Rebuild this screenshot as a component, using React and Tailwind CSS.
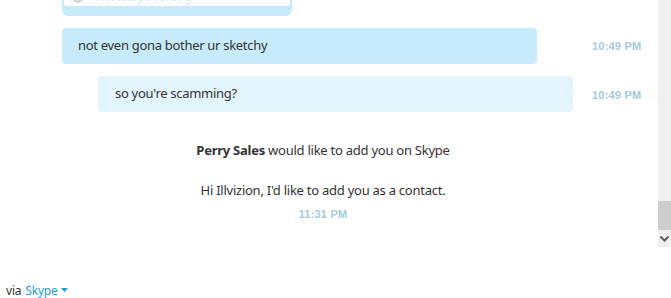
import React from "react";

export default function App() {
  const font = { fontFamily: '"Segoe UI", "Noto Sans", "Open Sans", sans-serif' };
  const ts = { fontFamily: '"Liberation Sans", Arial, sans-serif' };
  return (
    <div className="w-[671px] h-[298px] bg-white relative overflow-hidden text-[#333]" style={font}>
      <div className="flex h-[247px]">
        <div className="flex-1 flex flex-col">
          {/* partial top bubble */}
          <div className="ml-[62px] w-[230px] h-[16px] bg-[#c7ebfb] rounded-b-[6px] relative overflow-hidden">
            <div className="absolute left-[2px] right-[2px] top-0 h-[6px] bg-[#fbfdfe] rounded-b-[3px] overflow-hidden">
              <div className="absolute left-[8px] top-[-10px] w-[12px] h-[13px] rounded-full bg-[#dadada]"></div>
              <div className="absolute left-[30px] top-[-12px] text-[14px] text-[#e6eaec] leading-[16px]">www.sythe.org</div>
            </div>
          </div>
          {/* row 1 */}
          <div className="flex items-center mt-[12px] h-[36px]">
            <div className="ml-[62px] w-[475px] h-[36px] bg-[#c7ebfb] rounded-[4px] flex items-center pl-[16px] text-[13px] tracking-[-0.3px]">
              not even gona bother ur sketchy
            </div>
            <div className="ml-[55px] text-[11px] font-bold text-[#a6c9dd] tracking-[0.2px]" style={ts}>10:49 PM</div>
          </div>
          {/* row 2 */}
          <div className="flex items-center mt-[12px] h-[36px]">
            <div className="ml-[98px] w-[475px] h-[36px] bg-[#e3f4fc] rounded-[4px] flex items-center pl-[17px] text-[13px] tracking-[-0.3px] relative">
              so you're scamming?
              <svg className="absolute right-[-5px] top-[12px]" width="6" height="12" viewBox="0 0 6 12">
                <path d="M0 0 C0 3 1 4.5 3 5.5 L5 6 L3 6.5 C1 7.5 0 9 0 12 Z" fill="#e3f4fc" />
              </svg>
            </div>
            <div className="ml-[19px] mt-[2px] text-[11px] font-bold text-[#a6c9dd] tracking-[0.2px]" style={ts}>10:49 PM</div>
          </div>
          {/* contact request */}
          <div className="mt-[28px] flex flex-col items-center w-[646px]">
            <div className="text-[13px] tracking-[-0.25px] leading-[20px]"><span className="font-bold">Perry Sales</span> would like to add you on Skype</div>
            <div className="mt-[20px] text-[13px] tracking-[-0.25px] leading-[20px]">Hi Illvizion, I'd like to add you as a contact.</div>
            <div className="mt-[7px] text-[11px] font-bold text-[#a6c9dd] leading-[14px] tracking-[0.2px]" style={ts}>11:31 PM</div>
          </div>
        </div>
        {/* scrollbar */}
        <div className="w-[13px] h-[247px] bg-[#f0f0f0] flex flex-col justify-end">
          <div className="h-[29px] bg-[#cdcdcd]"></div>
          <div className="h-[17px] flex items-center justify-center">
            <svg width="9" height="6" viewBox="0 0 9 6">
              <path d="M0.5 0.5 L4.5 4.5 L8.5 0.5" fill="none" stroke="#606060" strokeWidth="2" />
            </svg>
          </div>
        </div>
      </div>
      {/* footer */}
      <div className="absolute left-[6px] top-[284px] flex items-center text-[12px] tracking-[-0.2px] leading-[13px]">
        <span className="text-[#333]">via</span>
        <span className="ml-[4px] text-[#1f9bd7]">Skype</span>
        <svg className="ml-[3px]" width="7" height="5" viewBox="0 0 7 5">
          <path d="M0 0 L7 0 L3.5 4 Z" fill="#1f9bd7" />
        </svg>
      </div>
    </div>
  );
}
